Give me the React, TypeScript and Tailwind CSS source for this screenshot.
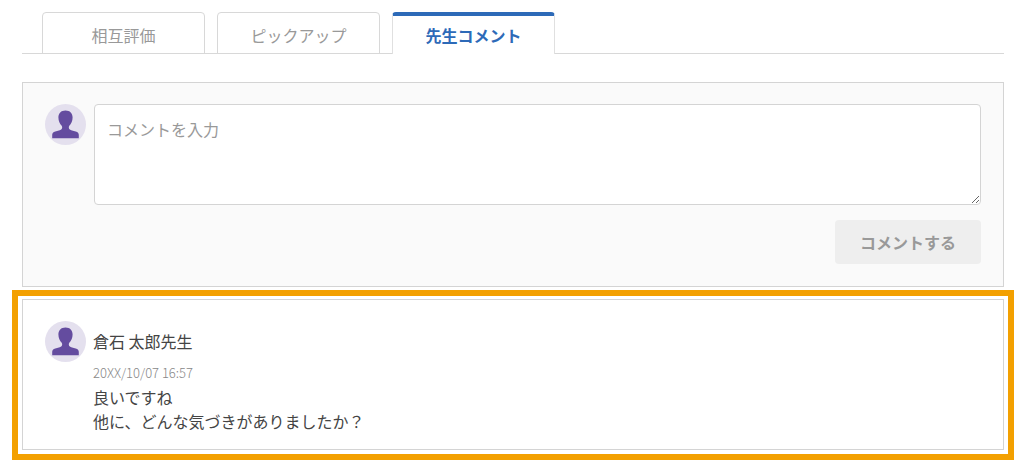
import { useState } from 'react'
import clsx from 'clsx'

const TABS = [
  { id: 'mutual', label: '相互評価' },
  { id: 'pickup', label: 'ピックアップ' },
  { id: 'teacher', label: '先生コメント' },
] as const
type TabId = typeof TABS[number]['id']

const COMMENTS = [
  {
    id: 'c1',
    author: '倉石 太郎先生',
    date: '20XX/10/07 16:57',
    lines: ['良いですね', '他に、どんな気づきがありましたか？'],
  },
]

function Avatar() {
  return (
    <svg viewBox="0 0 41 41" aria-hidden="true" className="size-[41px] shrink-0">
      <circle cx="20.5" cy="20.5" r="20.5" fill="#e4e0ee" />
      <path
        fill="#644c9f"
        d="M20.500 6.500C16 6.500 13.400 9.300 13.400 13.500C13.400 17.200 14.900 19.800 16.700 21.800C17.500 23.200 17.300 24.600 16.200 25.500C14.600 26.500 11.500 26.900 9.500 27.800C8 28.500 7.200 29.500 7.200 31V34.300H33.800V31C33.800 29.500 33 28.500 31.500 27.800C29.500 26.900 26.400 26.500 24.800 25.500C23.700 24.600 23.500 23.200 24.300 21.800C26.100 19.800 27.600 17.200 27.600 13.500C27.600 9.300 25 6.500 20.500 6.500Z"
      />
    </svg>
  )
}

export default function App() {
  const [tab, setTab] = useState<TabId>('teacher')
  const [text, setText] = useState('')

  return (
    <main className="bg-white pt-3 pb-1 font-['Noto_Sans_CJK_JP',sans-serif] text-base leading-6 text-[#444]">
      <div role="tablist" className="mr-4 ml-[22px] flex gap-3 border-b border-[#d8d8d8] pl-5">
        {TABS.map((t) => (
          <button
            key={t.id}
            type="button"
            role="tab"
            aria-selected={tab === t.id}
            onClick={() => setTab(t.id)}
            className={clsx(
              '-mb-px h-[42px] w-[163px] rounded-t border-x',
              tab === t.id
                ? 'border-t-4 border-x-[#e0e0e0] border-t-[#2d6ab8] bg-white font-bold text-[#2d6ab8]'
                : 'border-t border-b border-[#d8d8d8] pt-1 text-[#999]',
            )}
          >
            {t.label}
          </button>
        ))}
      </div>

      <form
        onSubmit={(e) => e.preventDefault()}
        className="mt-7 mr-4 ml-[22px] border border-[#d4d4d4] bg-[#fafafa] px-[22px] pt-[21px] pb-[22px]"
      >
        <div className="flex gap-2">
          <Avatar />
          <textarea
            aria-label="コメントを入力"
            placeholder="コメントを入力"
            value={text}
            onChange={(e) => setText(e.target.value)}
            className="h-[101px] min-w-0 flex-1 resize rounded border border-[#d4d4d4] bg-white p-3 placeholder:text-[#999]"
          />
        </div>
        <div className="mt-[15px] flex justify-end">
          <button type="submit" disabled={!text} className="rounded bg-[#eee] px-[25px] py-[10px] font-bold text-[#999]">
            コメントする
          </button>
        </div>
      </form>

      <section className="mt-[3px] mr-[6px] ml-3 border-6 border-[#f3a000] p-1 pt-[3px]">
        {COMMENTS.map((c) => (
          <article key={c.id} className="flex gap-[7px] border border-[#d4d4d4] px-[22px] pt-[21px] pb-4">
            <Avatar />
            <div>
              <h2 className="flex h-10 items-center">{c.author}</h2>
              <time className="block text-[13px] leading-6 font-light text-[#888]">{c.date}</time>
              {c.lines.map((line) => (
                <p key={line}>{line}</p>
              ))}
            </div>
          </article>
        ))}
      </section>
    </main>
  )
}
